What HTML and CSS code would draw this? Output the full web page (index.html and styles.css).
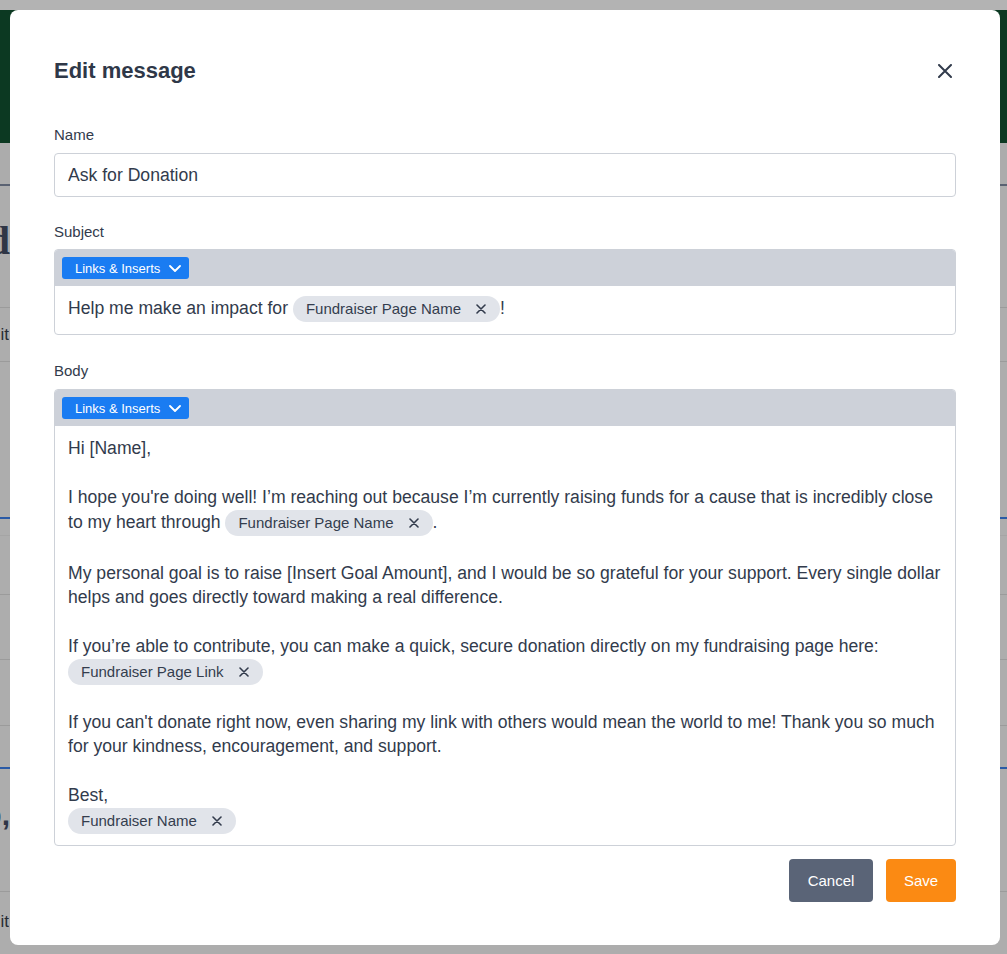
FILE: index.html
```html
<!DOCTYPE html>
<html lang="en">
<head>
<meta charset="utf-8">
<title>Edit message</title>
<link rel="stylesheet" href="styles.css">
</head>
<body>
<div class="page">
  <div class="topbar"></div>
  <div class="hero"></div>
  <div class="subnav"></div>
  <div class="bg-heading"><div class="frag big">Build</div></div>
  <div class="bg-row"><div class="frag small">Edit</div></div>
  <div class="bg-gap"></div>
  <div class="bg-row blue"></div>
  <div class="bg-row faint h59"></div>
  <div class="bg-row h65"></div>
  <div class="bg-row h66"></div>
  <div class="bg-row h42"></div>
  <div class="bg-heading2 blue"><div class="frag big2">Help,</div></div>
  <div class="bg-row last"><div class="frag small">Edit</div></div>
</div>

<div class="modal" role="dialog" aria-labelledby="modal-title">
  <div class="modal-header">
    <h2 class="modal-title" id="modal-title">Edit message</h2>
    <button class="close-btn" aria-label="Close">
      <svg width="14" height="14" viewBox="0 0 14 14"><path d="M1 1L13 13M13 1L1 13" stroke="#323b4c" stroke-width="2" stroke-linecap="round"/></svg>
    </button>
  </div>

  <div class="field name-field">
    <label class="field-label">Name</label>
    <div class="text-input">Ask for Donation</div>
  </div>

  <div class="field subject-field">
    <label class="field-label">Subject</label>
    <div class="editor">
      <div class="toolbar">
        <button class="insert-btn">Links &amp; Inserts
          <svg width="12" height="7" viewBox="0 0 12 7"><path d="M1 1l5 5 5-5" fill="none" stroke="#fff" stroke-width="1.8" stroke-linecap="round" stroke-linejoin="round"/></svg>
        </button>
      </div>
      <div class="editor-content subject">Help me make an impact for <span class="chip">Fundraiser Page Name<svg class="chip-x" width="10" height="10" viewBox="0 0 10 10"><path d="M1 1L9 9M9 1L1 9" stroke="#323b4c" stroke-width="1.6" stroke-linecap="round"/></svg></span>!</div>
    </div>
  </div>

  <div class="field grow">
    <label class="field-label">Body</label>
    <div class="editor body-editor">
      <div class="toolbar">
        <button class="insert-btn">Links &amp; Inserts
          <svg width="12" height="7" viewBox="0 0 12 7"><path d="M1 1l5 5 5-5" fill="none" stroke="#fff" stroke-width="1.8" stroke-linecap="round" stroke-linejoin="round"/></svg>
        </button>
      </div>
      <div class="editor-content body">
        <div class="line">Hi [Name],</div>
        <div class="line"><br></div>
        <div class="line">I hope you're doing well! I’m reaching out because I’m currently raising funds for a cause that is incredibly close to my heart through <span class="chip">Fundraiser Page Name<svg class="chip-x" width="10" height="10" viewBox="0 0 10 10"><path d="M1 1L9 9M9 1L1 9" stroke="#323b4c" stroke-width="1.6" stroke-linecap="round"/></svg></span>.</div>
        <div class="line"><br></div>
        <div class="line">My personal goal is to raise [Insert Goal Amount], and I would be so grateful for your support. Every single dollar helps and goes directly toward making a real difference.</div>
        <div class="line"><br></div>
        <div class="line">If you’re able to contribute, you can make a quick, secure donation directly on my fundraising page here: <span class="chip">Fundraiser Page Link<svg class="chip-x" width="10" height="10" viewBox="0 0 10 10"><path d="M1 1L9 9M9 1L1 9" stroke="#323b4c" stroke-width="1.6" stroke-linecap="round"/></svg></span></div>
        <div class="line"><br></div>
        <div class="line">If you can't donate right now, even sharing my link with others would mean the world to me! Thank you so much for your kindness, encouragement, and support.</div>
        <div class="line"><br></div>
        <div class="line">Best,</div>
        <div class="line"><span class="chip">Fundraiser Name<svg class="chip-x" width="10" height="10" viewBox="0 0 10 10"><path d="M1 1L9 9M9 1L1 9" stroke="#323b4c" stroke-width="1.6" stroke-linecap="round"/></svg></span></div>
      </div>
    </div>
  </div>

  <div class="modal-footer">
    <button class="btn btn-cancel">Cancel</button>
    <button class="btn btn-save">Save</button>
  </div>
</div>
</body>
</html>
```

FILE: styles.css
```css
* { box-sizing: border-box; }

html, body {
  margin: 0;
  padding: 0;
  height: 100%;
  overflow: hidden;
}

body {
  font-family: "Liberation Sans", Arial, sans-serif;
  background: #adadad;
}

/* ---------- dimmed background page ---------- */
.page {
  display: flex;
  flex-direction: column;
}
.topbar { height: 10px; background: #b3b3b3; }
.hero { height: 133px; background: #0c3922; }
.subnav {
  height: 43px;
  background: #acacac;
  border-bottom: 2px solid #5a6272;
}
.bg-heading {
  height: 121px;
  display: flex;
  align-items: flex-end;
  padding-bottom: 46px;
}
.frag {
  width: 10px;
  overflow: hidden;
  display: flex;
  justify-content: flex-end;
  white-space: nowrap;
  color: #2f3646;
}
.frag.big {
  font-family: "Liberation Serif", serif;
  font-weight: bold;
  font-size: 40px;
  line-height: 40px;
}
.frag.small {
  font-size: 17px;
  line-height: 20px;
  color: #262b33;
  width: 9px;
}
.bg-row {
  height: 54px;
  border-top: 1px solid #9b9b9b;
  display: flex;
  align-items: center;
}
.bg-gap { height: 156px; border-top: 1px solid #9b9b9b; }
.bg-row.blue { border-top: 2px solid #2a5aa6; height: 18px; }
.bg-row.faint { border-top: 1px solid #a5a5a5; }
.bg-row.h59 { height: 59px; }
.bg-row.h65 { height: 65px; }
.bg-row.h66 { height: 66px; }
.bg-row.h42 { height: 42px; }
.bg-heading2 {
  height: 124px;
  border-top: 2px solid #2a5aa6;
  padding-top: 30px;
}
.frag.big2 {
  width: 10px;
  font-weight: bold;
  font-size: 30px;
  line-height: 32px;
}
.bg-row.last { height: 60px; }

/* ---------- modal ---------- */
.modal {
  position: fixed;
  top: 10px;
  left: 10px;
  right: 7px;
  bottom: 9px;
  background: #ffffff;
  border-radius: 8px;
  padding: 46px 44px 43px;
  display: flex;
  flex-direction: column;
  color: #323b4c;
}

.modal-header {
  display: flex;
  align-items: center;
  justify-content: space-between;
  height: 30px;
  margin-bottom: 39px;
  flex: none;
}
.modal-title {
  margin: 0;
  font-size: 22px;
  line-height: 30px;
  font-weight: bold;
  color: #2f3848;
}
.close-btn {
  border: 0;
  background: none;
  padding: 0;
  margin-right: 4px;
  width: 14px;
  height: 14px;
  display: flex;
  cursor: pointer;
}

.field {
  display: flex;
  flex-direction: column;
  margin-bottom: 24px;
  flex: none;
}
.field.name-field { margin-bottom: 25px; }
.field.subject-field { margin-bottom: 26px; }
.field.subject-field .field-label { margin-bottom: 7px; }
.field.grow {
  margin-bottom: 13px;
  flex: 1 1 0;
  min-height: 0;
}

.field-label {
  font-size: 15px;
  line-height: 20px;
  margin-bottom: 8px;
  color: #323b4c;
}

.text-input {
  height: 44px;
  border: 1px solid #cdd1d8;
  border-radius: 4px;
  padding: 0 13px;
  font-size: 17.6px;
  line-height: 42px;
  color: #323b4c;
}

.editor {
  border: 1px solid #cdd1d8;
  border-radius: 4px;
  overflow: hidden;
}
.body-editor {
  flex: 1 1 0;
  min-height: 0;
  display: flex;
  flex-direction: column;
}

.toolbar {
  height: 36px;
  flex: none;
  background: #cdd1d9;
  padding: 7px 7px;
  display: flex;
  align-items: flex-start;
}

.insert-btn {
  height: 22px;
  background: #1a7cf2;
  color: #ffffff;
  border: 0;
  border-radius: 3px;
  font-family: "Liberation Sans", Arial, sans-serif;
  font-size: 13px;
  padding: 0 8px 0 13px;
  display: flex;
  align-items: center;
  gap: 9px;
  cursor: pointer;
}

.editor-content {
  font-size: 17.6px;
  color: #323b4c;
}
.editor-content.subject {
  padding: 9px 13px 12px;
  line-height: 26px;
}
.editor-content.body {
  padding: 10px 13px 11px;
  line-height: 24.5px;
}

.chip {
  display: inline-flex;
  align-items: center;
  height: 26px;
  padding: 0 14px 0 13px;
  border-radius: 13px;
  background: #e1e4ea;
  font-size: 15px;
  line-height: 26px;
  color: #343d4e;
  vertical-align: middle;
  gap: 15px;
}
.chip-x { display: block; flex: none; }

.modal-footer {
  display: flex;
  justify-content: flex-end;
  gap: 13px;
  flex: none;
}
.btn {
  height: 43px;
  border: 0;
  border-radius: 4px;
  font-family: "Liberation Sans", Arial, sans-serif;
  font-size: 15px;
  color: #ffffff;
  padding: 0 18px;
  cursor: pointer;
}
.btn-cancel { background: #5a6477; width: 84px; }
.btn-save { background: #fb8a13; width: 70px; }
```
